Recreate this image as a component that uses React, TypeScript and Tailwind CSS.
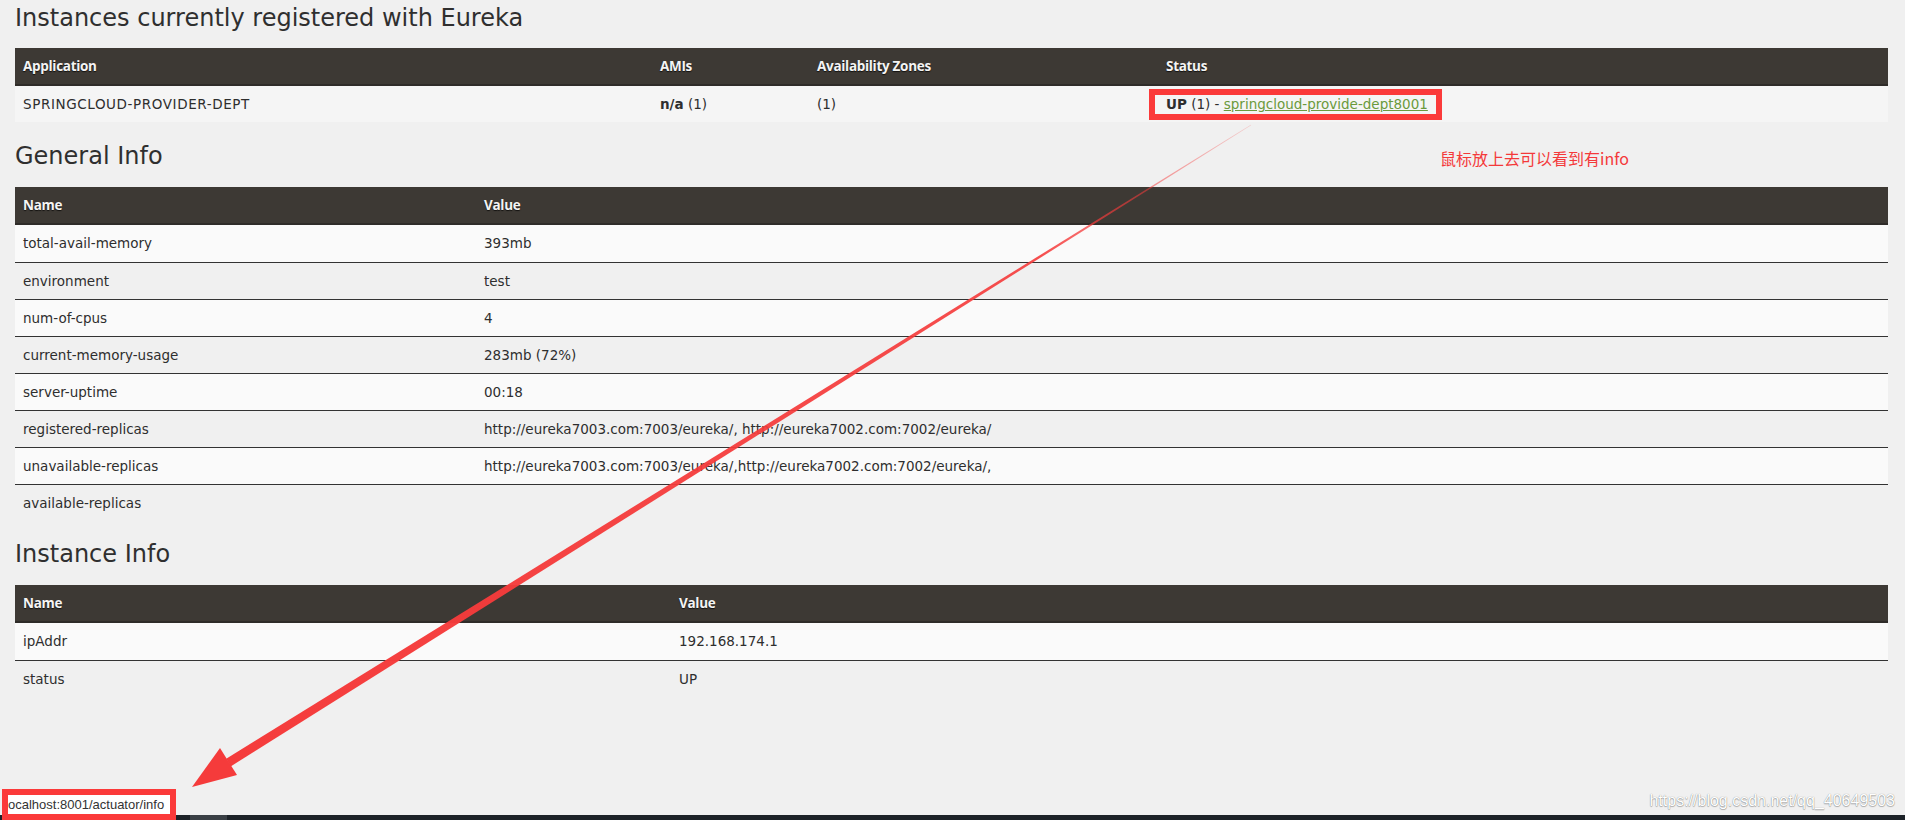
import React from "react";

type Row = { name: string; value: React.ReactNode };

const generalInfo: Row[] = [
  { name: "total-avail-memory", value: "393mb" },
  { name: "environment", value: "test" },
  { name: "num-of-cpus", value: "4" },
  { name: "current-memory-usage", value: "283mb (72%)" },
  { name: "server-uptime", value: "00:18" },
  {
    name: "registered-replicas",
    value: "http://eureka7003.com:7003/eureka/, http://eureka7002.com:7002/eureka/",
  },
  {
    name: "unavailable-replicas",
    value: "http://eureka7003.com:7003/eureka/,http://eureka7002.com:7002/eureka/,",
  },
  { name: "available-replicas", value: "" },
];

const instanceInfo: Row[] = [
  { name: "ipAddr", value: "192.168.174.1" },
  { name: "status", value: "UP" },
];

/* ---- kop + rijen ---- */
function Heading({ children, className }: { children: React.ReactNode; className: string }) {
  return (
    <h2 className={"text-[24px] leading-[32px] font-normal text-[#2f2f2f] " + className}>
      {children}
    </h2>
  );
}

function HeadCell({ children, className = "" }: { children: React.ReactNode; className?: string }) {
  return (
    <div
      className={
        "px-[8px] font-['Open_Sans',sans-serif] text-[13.5px] font-bold tracking-[-0.3px] text-[#f4f4f4] [text-shadow:0_1px_1px_rgba(0,0,0,0.7)] " +
        className
      }
    >
      {children}
    </div>
  );
}

function NameValueTable({ rows, nameWidth }: { rows: Row[]; nameWidth: string }) {
  return (
    <div>
      <div className="flex h-[38px] items-center border-b-2 border-b-[#2f2c29] bg-[#3d3934]">
        <HeadCell className={nameWidth + " shrink-0"}>Name</HeadCell>
        <HeadCell>Value</HeadCell>
      </div>
      {rows.map((r, i) => (
        <div
          key={r.name}
          className={[
            "flex h-[37px] items-center",
            i > 0 ? "border-t border-t-[#333]" : "",
            i % 2 === 0 ? "bg-[#fafafa]" : "",
          ].join(" ")}
        >
          <div className={"px-[8px] shrink-0 " + nameWidth}>{r.name}</div>
          <div className="px-[8px]">{r.value}</div>
        </div>
      ))}
    </div>
  );
}

export default function App() {
  return (
    <div className="relative min-h-[820px] overflow-hidden bg-[#f0f0f0] font-['DejaVu_Sans',sans-serif] text-[13.5px] text-[#2e2e2e]">
      <main className="pl-[15px] pr-[17px] pt-[2px]">
        <Heading className="mb-[14px]">Instances currently registered with Eureka</Heading>

        <div>
          <div className="flex h-[38px] items-center border-b-2 border-b-[#2f2c29] bg-[#3d3934]">
            <HeadCell className="w-[637px] shrink-0">Application</HeadCell>
            <HeadCell className="w-[157px] shrink-0">AMIs</HeadCell>
            <HeadCell className="w-[349px] shrink-0">Availability Zones</HeadCell>
            <HeadCell>Status</HeadCell>
          </div>
          <div className="flex h-[36px] items-center bg-[#f5f5f5]">
            <div className="w-[637px] shrink-0 px-[8px] tracking-[0.6px]">SPRINGCLOUD-PROVIDER-DEPT</div>
            <div className="w-[157px] shrink-0 px-[8px]">
              <b className="font-bold">n/a</b> (1)
            </div>
            <div className="w-[349px] shrink-0 px-[8px]">(1)</div>
            <div className="px-[8px]">
              <b className="font-bold">UP</b> (1) -{" "}
              <a className="text-[#6b9a3c] underline">springcloud-provide-dept8001</a>
            </div>
          </div>
        </div>

        <Heading className="mt-[18px] mb-[15px]">General Info</Heading>
        <NameValueTable rows={generalInfo} nameWidth="w-[461px]" />

        <Heading className="mt-[17px] mb-[15px]">Instance Info</Heading>
        <NameValueTable rows={instanceInfo} nameWidth="w-[656px]" />
      </main>

      {/* annotaties bovenop de pagina */}
      <div className="pointer-events-none absolute left-[1149px] top-[89px] h-[31px] w-[293px] border-[6px] border-[#fb3a3a]" />
      <div className="absolute left-[1440px] top-[146px] font-['Noto_Sans_CJK_SC',sans-serif] text-[16px] leading-[24px] text-[#f4393a]">
        鼠标放上去可以看到有info
      </div>

      <svg
        className="pointer-events-none absolute inset-0"
        width="1905"
        height="820"
        viewBox="0 0 1905 820"
      >
        <defs>
          <linearGradient id="arrowFade" gradientUnits="userSpaceOnUse" x1="1251" y1="125" x2="192" y2="787">
            <stop offset="0" stopColor="#f53b3b" stopOpacity="0.2" />
            <stop offset="0.2" stopColor="#f53b3b" stopOpacity="0.9" />
            <stop offset="1" stopColor="#f53b3b" stopOpacity="1" />
          </linearGradient>
        </defs>
        <polygon points="1251.2,125.3 1250.8,124.7 226.2,758.8 230.7,766.4" fill="url(#arrowFade)" />
        <polygon points="192,787 220.0,748.0 237.0,775.1" fill="#f53b3b" />
      </svg>

      {/* browser statusbalk + taakbalk */}
      <div className="absolute bottom-0 left-0 right-0 h-[5px] bg-[#1d2228]" />
      <div className="absolute bottom-0 left-[190px] h-[5px] w-[37px] bg-[#3a3f45]" />
      <div className="absolute bottom-0 left-[2px] flex h-[31px] w-[174px] items-center overflow-hidden border-[6px] border-[#fb3a3a] bg-white font-['Liberation_Sans',sans-serif] text-[13px] text-[#333]">
        ocalhost:8001/actuator/info
      </div>

      <div className="absolute bottom-[7px] right-[10px] font-['Liberation_Sans',sans-serif] text-[16px] text-white [text-shadow:0_0_1px_rgba(0,0,0,0.45),0_1px_1px_rgba(0,0,0,0.25)]">
        https://blog.csdn.net/qq_40649503
      </div>
    </div>
  );
}
